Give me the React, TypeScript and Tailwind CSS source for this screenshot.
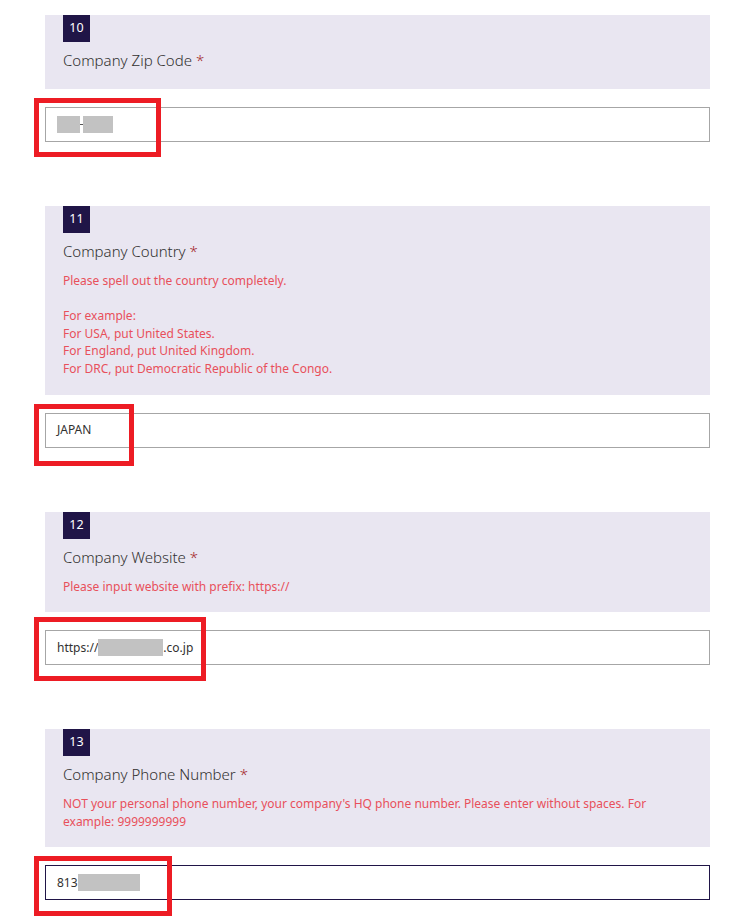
type Question = {
  num: number;
  title: string;
  desc?: string[];
  focused?: boolean;
  mark: { top: number; bottom: number; width: number };
  value: React.ReactNode;
};

function Blur({ w }: { w: number }) {
  return <span className="inline-block h-[17px] bg-[#c2c2c2] align-middle" style={{ width: w }} />;
}

const questions: Question[] = [
  {
    num: 10,
    title: "Company Zip Code",
    mark: { top: -9, bottom: -15, width: 127 },
    value: (
      <span className="flex items-center">
        <Blur w={23} />
        <span className="w-[3px] h-px bg-[#555]" />
        <Blur w={30} />
      </span>
    ),
  },
  {
    num: 11,
    title: "Company Country",
    desc: [
      "Please spell out the country completely.",
      "",
      "For example:",
      "For USA, put United States.",
      "For England, put United Kingdom.",
      "For DRC, put Democratic Republic of the Congo.",
    ],
    mark: { top: -9, bottom: -18, width: 100 },
    value: <span>JAPAN</span>,
  },
  {
    num: 12,
    title: "Company Website",
    desc: ["Please input website with prefix: https://"],
    mark: { top: -13, bottom: -16, width: 172 },
    value: (
      <span className="flex items-center">
        https://
        <Blur w={65} />
        .co.jp
      </span>
    ),
  },
  {
    num: 13,
    title: "Company Phone Number",
    desc: [
      "NOT your personal phone number, your company's HQ phone number. Please enter without spaces. For example: 9999999999",
    ],
    focused: true,
    mark: { top: -9, bottom: -16, width: 138 },
    value: (
      <span className="flex items-center">
        813
        <Blur w={62} />
      </span>
    ),
  },
];

function QuestionBlock({ q }: { q: Question }) {
  return (
    <div className="mb-[64px]">
      <div className="bg-[#e9e6f1] pl-[18px] pr-6 pb-[17px]">
        <div className="w-[27px] h-[27px] bg-[#201547] text-white text-[12.5px] flex items-center justify-center">
          {q.num}
        </div>
        <div className="mt-2 pb-[2px] text-[15px] leading-5 font-light text-[#323130]">
          {q.title} <span className="text-[#a4262c]">*</span>
        </div>
        {q.desc && (
          <div className="mt-[9px] text-[12px] leading-[17.6px] text-[#e8505b]">
            {q.desc.map((line, i) => (
              <div key={i} className="min-h-[17.6px]">
                {line}
              </div>
            ))}
          </div>
        )}
      </div>
      <div className="relative mt-[18px]">
        <div
          className={
            q.focused
              ? "h-[35px] border border-[#201547] px-[11px] flex items-center text-[12px] text-[#323130]"
              : "h-[35px] border border-[#a6a6a6] px-[11px] flex items-center text-[12px] text-[#323130]"
          }
        >
          {q.value}
        </div>
        <div
          className="absolute left-[-11px] border-[5px] border-[#ed1c24] pointer-events-none"
          style={{ top: q.mark.top, bottom: q.mark.bottom, width: q.mark.width }}
        />
      </div>
    </div>
  );
}

export default function App() {
  return (
    <div className="bg-white min-h-[920px] pt-[15px] pl-[45px] pr-[45px] font-['Noto_Sans',sans-serif] overflow-hidden">
      {questions.map((q) => (
        <QuestionBlock key={q.num} q={q} />
      ))}
    </div>
  );
}
